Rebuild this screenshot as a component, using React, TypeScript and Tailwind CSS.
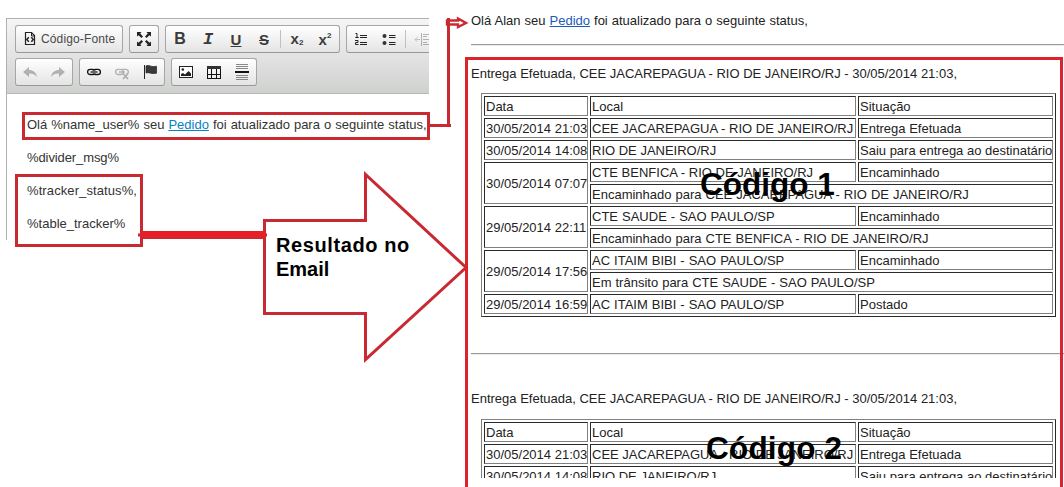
import React from "react";
import type { ReactNode } from "react";

type Cell = { text: string; rowSpan?: number; colSpan?: number };

const rows: Cell[][] = [
  [{ text: "Data" }, { text: "Local" }, { text: "Situação" }],
  [{ text: "30/05/2014 21:03" }, { text: "CEE JACAREPAGUA - RIO DE JANEIRO/RJ" }, { text: "Entrega Efetuada" }],
  [{ text: "30/05/2014 14:08" }, { text: "RIO DE JANEIRO/RJ" }, { text: "Saiu para entrega ao destinatário" }],
  [{ text: "30/05/2014 07:07", rowSpan: 2 }, { text: "CTE BENFICA - RIO DE JANEIRO/RJ" }, { text: "Encaminhado" }],
  [{ text: "Encaminhado para CEE JACAREPAGUA - RIO DE JANEIRO/RJ", colSpan: 2 }],
  [{ text: "29/05/2014 22:11", rowSpan: 2 }, { text: "CTE SAUDE - SAO PAULO/SP" }, { text: "Encaminhado" }],
  [{ text: "Encaminhado para CTE BENFICA - RIO DE JANEIRO/RJ", colSpan: 2 }],
  [{ text: "29/05/2014 17:56", rowSpan: 2 }, { text: "AC ITAIM BIBI - SAO PAULO/SP" }, { text: "Encaminhado" }],
  [{ text: "Em trânsito para CTE SAUDE - SAO PAULO/SP", colSpan: 2 }],
  [{ text: "29/05/2014 16:59" }, { text: "AC ITAIM BIBI - SAO PAULO/SP" }, { text: "Postado" }],
];

function TrackerTable() {
  return (
    <table className="ml-[10px] w-[575px] table-fixed border-separate border-spacing-[2px] border border-t-[#808080] border-l-[#808080] border-r-[#2a2a2a] border-b-[#2a2a2a]">
      <colgroup>
        <col className="w-[104px]" />
        <col className="w-[266px]" />
        <col className="w-[195px]" />
      </colgroup>
      <tbody>
        {rows.map((row, i) => (
          <tr key={i} className="h-[20px]">
            {row.map((c) => (
              <td
                key={c.text}
                rowSpan={c.rowSpan}
                colSpan={c.colSpan}
                className={`border border-t-[#2a2a2a] border-l-[#2a2a2a] border-r-[#808080] border-b-[#808080] px-px pt-[2px] pb-0 align-middle leading-[16px] whitespace-nowrap ${
                  c.colSpan || c.text.endsWith("/SP") ? "[word-spacing:0.4px]" : ""
                }`}
              >
                {c.text}
              </td>
            ))}
          </tr>
        ))}
      </tbody>
    </table>
  );
}

function Group({ children, className = "" }: { children: ReactNode; className?: string }) {
  return (
    <div
      className={`flex h-[28px] shrink-0 items-center rounded-[3px] border border-[#a6a6a6] border-b-[#979797] bg-linear-to-b from-white to-[#e4e4e4] ${className}`}
    >
      {children}
    </div>
  );
}

function Tool({ children, dim }: { children: ReactNode; dim?: boolean }) {
  return (
    <span className={`flex h-[26px] w-[28px] shrink-0 items-center justify-center text-[#3b3b3b] ${dim ? "opacity-35" : ""}`}>
      {children}
    </span>
  );
}

function Icon({ children }: { children: ReactNode }) {
  return (
    <svg width="16" height="16" viewBox="0 0 16 16" fill="none" stroke="currentColor" className="shrink-0">
      {children}
    </svg>
  );
}

const Separator = () => <span className="mx-[2px] h-[18px] w-px shrink-0 bg-[#c0c0c0]" />;

function Toolbar() {
  return (
    <div className="flex h-[75px] flex-col gap-[5px] border-b border-[#b6b6b6] bg-linear-to-b from-[#f5f5f5] to-[#cfd1cf] pt-[6px] pl-[8px]">
      <div className="flex gap-[6px]">
        <Group className="w-[108px] pl-[6px]">
          <Icon>
            <path d="M3.5 1.5h6l3 3v9h-9z" stroke="#222" strokeWidth="1.2" />
            <path d="M9.500 1.500V5h3" stroke="#222" />
            <path d="M6.800 6.300 4.800 8.500l2 2.200M9.300 6.300l2 2.200-2 2.200" stroke="#222" strokeWidth="1.500" />
          </Icon>
          <span className="ml-[3px] text-[12px] leading-none tracking-[0.14px] text-[#484848] [font-size:12.2px]">Código-Fonte</span>
        </Group>
        <Group className="w-[30px]">
          <Tool>
            <Icon>
              <path
                fill="#222"
                stroke="none"
                d="M1 1h4.500L4.200 2.600 7 5.400 5.400 7 2.600 4.200 1 5.500zM15 1v4.500l-1.600-1.300L10.600 7 9 5.400l2.800-2.800L10.500 1zM1 15v-4.500l1.600 1.300L5.400 9 7 10.600l-2.800 2.800L5.500 15zM15 15h-4.500l1.300-1.600L9 10.600 10.600 9l2.800 2.800 1.600-1.300z"
              />
            </Icon>
          </Tool>
        </Group>
        <Group className="w-[175px]">
          <Tool><b className="text-[16px] leading-none">B</b></Tool>
          <Tool><b className="font-['Liberation_Mono',monospace] text-[17px] leading-none italic">I</b></Tool>
          <Tool><b className="text-[15px] leading-none underline decoration-1 underline-offset-1">U</b></Tool>
          <Tool><b className="text-[15px] leading-none line-through decoration-1">S</b></Tool>
          <Separator />
          <Tool><b className="flex text-[15px] leading-none">x<span className="mt-[8px] text-[8px]">2</span></b></Tool>
          <Tool><b className="flex text-[15px] leading-none">x<span className="text-[8px]">2</span></b></Tool>
        </Group>
        <Group>
          <Tool>
            <Icon>
              <path d="M2.500 2.500h1.500v4M2.300 6.500h3.400M2 9.500h3v2H2.500v2h3" stroke="#222" />
              <path d="M7 4.500h7M7 6.500h7M7 11.500h7M7 13.500h7" stroke="#222" />
            </Icon>
          </Tool>
          <Tool>
            <Icon>
              <circle cx="3.500" cy="5" r="2" fill="#333" stroke="none" />
              <circle cx="3.500" cy="12" r="2" fill="#333" stroke="none" />
              <path d="M8 4.500h6.500M8 6.500h6.500M8 11.500h6.500M8 13.500h6.500" stroke="#222" />
            </Icon>
          </Tool>
          <Separator />
          <Tool dim>
            <Icon>
              <path d="M7.500 2v13" />
              <path d="M9 3.500h6M9 5.500h4M9 8.500h6M9 11.500h4M9 13.500h6" />
              <path d="M6 8.500H1M3.500 6 1 8.500 3.500 11" strokeDasharray="1.500 .7" />
            </Icon>
          </Tool>
        </Group>
      </div>
      <div className="flex gap-[6px]">
        <Group className="w-[58px]">
          <Tool dim>
            <Icon><path d="M7 3v3c4 0 7 2 8 7-2-2.500-4-3.500-8-3.500V13L1 8z" fill="currentColor" stroke="none" /></Icon>
          </Tool>
          <Tool dim>
            <Icon><path d="M9 3v3c-4 0-7 2-8 7 2-2.500 4-3.500 8-3.500V13l6-5z" fill="currentColor" stroke="none" /></Icon>
          </Tool>
        </Group>
        <Group className="w-[86px]">
          <Tool>
            <Icon>
              <rect x="1.600" y="5.300" width="7.600" height="5.200" rx="2.600" stroke="#111" strokeWidth="1.300" />
              <rect x="6.800" y="5.300" width="7.600" height="5.200" rx="2.600" stroke="#111" strokeWidth="1.300" />
              <path d="M5 8h6" stroke="#fff" strokeWidth="2.600" />
              <path d="M4.500 8h7" stroke="#111" strokeWidth="1.300" />
            </Icon>
          </Tool>
          <Tool dim>
            <Icon>
              <rect x="1.600" y="5.300" width="7.600" height="5.200" rx="2.600" strokeWidth="1.300" />
              <path d="M5 8h6M8 5.300h3.500c3.500 0 3.800 4 .8 5" strokeWidth="1.300" />
              <path d="m9 9.500 5 5.500M14 9.500 9 15" strokeWidth="1.800" />
            </Icon>
          </Tool>
          <Tool>
            <Icon>
              <path d="M2.500 1v14" stroke="#222" />
              <path d="M4 2c3-1.800 4.700 1.600 10.500.2v7C9.200 10.600 7.600 7.700 4 9z" fill="#3a3a3a" stroke="#222" strokeWidth=".7" />
            </Icon>
          </Tool>
        </Group>
        <Group className="w-[86px]">
          <Tool>
            <Icon>
              <rect x="1.500" y="2.500" width="13" height="11" fill="white" stroke="#222" />
              <circle cx="4.800" cy="5.500" r="1.300" fill="#222" stroke="none" />
              <path d="M3 12v-2l2-1 2 1.500L10.500 7 13 9.500V12z" fill="#222" stroke="none" />
            </Icon>
          </Tool>
          <Tool>
            <Icon>
              <path d="M1.500 2v12.500M5.500 2v12.500M10.500 2v12.500M14.500 2v12.500M1 10.500h14M1 14.500h14" stroke="#111" />
              <path d="M1 3.500h14" stroke="#333" strokeWidth="3" />
            </Icon>
          </Tool>
          <Tool>
            <Icon>
              <path d="M2 .5h12M2 2.500h12M2 4.500h12M2 11.500h12M2 13.500h12M2 15.500h12" stroke="#888" />
              <path d="M1 8h14" stroke="#111" strokeWidth="2" />
            </Icon>
          </Tool>
        </Group>
      </div>
    </div>
  );
}

function Editor() {
  return (
    <section className="mt-[18px] ml-[6px] h-[222px] w-[423px] shrink-0 overflow-hidden border-t border-l border-[#b0b0b0]">
      <Toolbar />
      <div className="flex flex-col gap-[13px] pt-[21px] pl-[20px] text-[13px] leading-[20px] whitespace-nowrap text-[#333]">
        <p className="[word-spacing:0.4px]">
          Olá %name_user% seu <a className="text-[#0782c1] underline">Pedido</a> foi atualizado para o seguinte status,
        </p>
        <p className="tracking-[-0.1px]">%divider_msg%</p>
        <p className="tracking-[0.1px]">%tracker_status%,</p>
        <p>%table_tracker%</p>
      </div>
    </section>
  );
}

const Rule = () => <hr className="h-[2px] border-t border-b border-t-[#9a9a9a] border-b-[#ececec]" />;

function Email() {
  return (
    <section className="ml-[42px] h-[478px] w-[593px] shrink-0 overflow-hidden text-[13px] leading-[20px] whitespace-nowrap text-[#222]">
      <p className="mt-[11px] mb-[13px] [word-spacing:0.4px]">
        Olá Alan seu <a className="text-[#1b5bb8] underline">Pedido</a> foi atualizado para o seguinte status,
      </p>
      <Rule />
      <p className="mt-[18px] mb-[9px]">Entrega Efetuada, CEE JACAREPAGUA - RIO DE JANEIRO/RJ - 30/05/2014 21:03,</p>
      <TrackerTable />
      <div className="mt-[36px]"><Rule /></div>
      <p className="mt-[34px] mb-[10px]">Entrega Efetuada, CEE JACAREPAGUA - RIO DE JANEIRO/RJ - 30/05/2014 21:03,</p>
      <TrackerTable />
    </section>
  );
}

function Annotations() {
  return (
    <div className="pointer-events-none absolute inset-0 text-black">
      <svg width="1064" height="487" viewBox="0 0 1064 487" fill="none" className="absolute inset-0">
        <g stroke="#c92a32" strokeWidth="3">
          <path d="M23.500 113.500h405v25h-405z" />
          <path d="M16.500 175.500h125v70h-125z" />
          <path d="M429 125.500h22M448.500 127V18" />
          <path d="M264.500 220.500h101v-46l100.500 93-100.500 92v-46h-101z" />
          <path d="M447 20.500h11v-2l8 4.500-8 4v-2.500h-11z" strokeWidth="2.400" />
        </g>
        <path d="M466.500 487V58.500h595V487" stroke="#dc222b" strokeWidth="3" />
        <path d="M138 235h129" stroke="#c92a32" strokeWidth="3" />
        <path d="M141 235h125" stroke="#c92a32" strokeWidth="8" />
        <path d="M141 234.500h125" stroke="#e81f27" strokeWidth="6" />
      </svg>
      <b className="absolute top-[233px] left-[276px] text-[20px] leading-[24px] tracking-[0.6px] whitespace-nowrap">
        Resultado no
        <br />
        <span className="tracking-normal">Email</span>
      </b>
      <b className="absolute top-[166px] left-[700px] text-[31.500px] leading-[36px] whitespace-nowrap">Código 1</b>
      <b className="absolute top-[430px] left-[706px] text-[31.500px] leading-[36px] tracking-[0.2px] whitespace-nowrap">Código 2</b>
    </div>
  );
}

export default function App() {
  return (
    <main className="relative flex h-[487px] w-[1064px] overflow-hidden bg-white font-['Liberation_Sans',Arial,sans-serif]">
      <Editor />
      <Email />
      <Annotations />
    </main>
  );
}
